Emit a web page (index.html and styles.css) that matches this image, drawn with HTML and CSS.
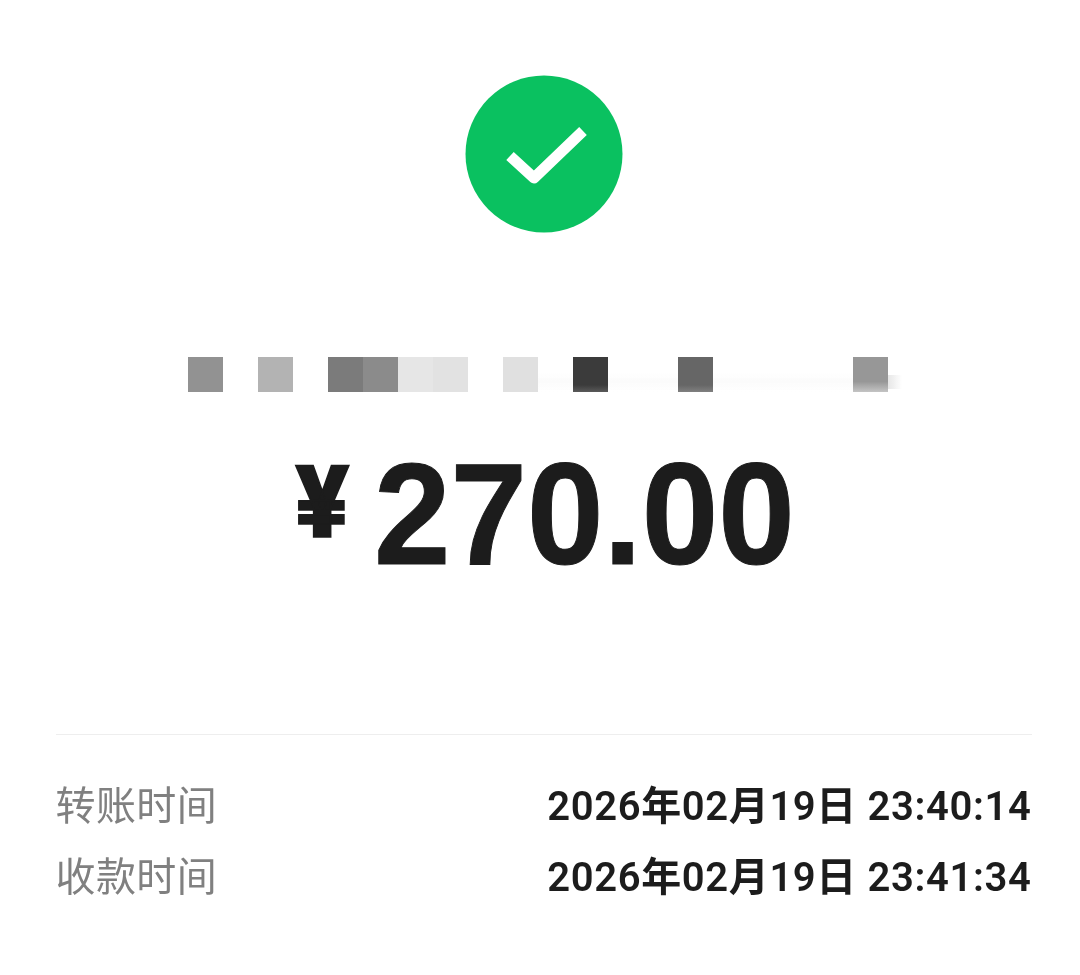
FILE: index.html
```html
<!DOCTYPE html>
<html lang="zh-CN">
<head>
<meta charset="utf-8">
<title>转账详情</title>
<link rel="stylesheet" href="styles.css">
</head>
<body>
<main class="page">
  <svg class="status" viewBox="0 0 158 158" aria-hidden="true">
    <circle class="status-disc" cx="79" cy="79" r="78.5"/>
    <path class="status-tick" d="M45 81 L69 103 L118 56" />
  </svg>
  <div class="mosaic" aria-hidden="true">
    <i class="px g1"></i><i></i><i class="px g2"></i><i></i><i class="px g3"></i><i class="px g4"></i><i class="px g5"></i><i class="px g6"></i><i></i><i class="px g7"></i><i class="smudge"></i><i class="px g8"></i><i class="smudge"></i><i class="smudge"></i><i class="px g9"></i><i class="smudge"></i><i class="smudge"></i><i class="smudge"></i><i class="smudge"></i><i class="px g10"></i>
  </div>
  <div class="amount"><span class="currency">¥</span><span class="value">270.00</span></div>
  <div class="details">
    <div class="row"><span class="label">转账时间</span><span class="time">2026年02月19日 23:40:14</span></div>
    <div class="row"><span class="label">收款时间</span><span class="time">2026年02月19日 23:41:34</span></div>
  </div>
</main>
</body>
</html>
```
FILE: styles.css
```css
* { box-sizing: border-box; }
html, body { margin: 0; background: #fff; }
.page {
  width: 1080px;
  height: 975px;
  overflow: hidden;
  padding-top: 75px;
  display: flex;
  flex-direction: column;
  align-items: center;
  font-family: Roboto, "Noto Sans CJK SC", sans-serif;
  color: #1c1c1c;
  filter: blur(0.5px);
}
.status { width: 158px; height: 158px; display: block; margin-left: 7px; }
.status-disc { fill: #0ac160; }
.status-tick { fill: none; stroke: #fff; stroke-width: 11; stroke-linejoin: round; }
.mosaic {
  margin-top: 124px;
  margin-left: -4px;
  display: grid;
  grid-template-columns: repeat(20, 35px);
  height: 35px;
}
.px { display: block; height: 35px; position: relative; }
.smudge { background: linear-gradient(transparent 45%, #fbfbfb 70%, transparent); }
.g1 { background: #929292; }
.g2 { background: #b3b3b3; }
.g3 { background: #7b7b7b; }
.g4 { background: #8b8b8b; }
.g5 { background: #e6e6e6; }
.g6 { background: #e2e2e2; }
.g7 { background: #e0e0e0; }
.g8 { background: linear-gradient(#3b3b3b 80%, #5a5a5a); }
.g9 { background: linear-gradient(#666 80%, #808080); }
.g10 { background: linear-gradient(#979797 70%, #c4c4c4); }
.g10::after {
  content: "";
  position: absolute;
  left: 35px;
  top: 18px;
  width: 14px;
  height: 14px;
  background: linear-gradient(90deg, #e6e6e6, transparent);
}
.amount {
  margin-top: 47px;
  height: 150px;
  display: flex;
  align-items: center;
  gap: 25px;
  font-weight: 700;
  margin-left: 10px;
}
.currency {
  font-size: 100px;
  font-weight: 900;
  line-height: 1;
  margin-top: -22px;
  -webkit-text-stroke: 1.5px #1c1c1c;
}
.value {
  font-family: "Liberation Sans", sans-serif;
  font-size: 144px;
  line-height: 150px;
  margin-top: 2px;
  transform: scaleX(0.955);
  transform-origin: left center;
  margin-right: -20px;
  -webkit-text-stroke: 1px #1c1c1c;
}
.details {
  width: 976px;
  margin-top: 145px;
  margin-left: 7px;
  border-top: 1px solid #eeeeee;
  padding-top: 40px;
  display: flex;
  flex-direction: column;
  gap: 15px;
}
.row {
  display: flex;
  justify-content: space-between;
  align-items: center;
  height: 56px;
  font-size: 40px;
}
.label { color: #808080; letter-spacing: 0.4px; }
.time { font-weight: 600; letter-spacing: 0.63px; }
```
